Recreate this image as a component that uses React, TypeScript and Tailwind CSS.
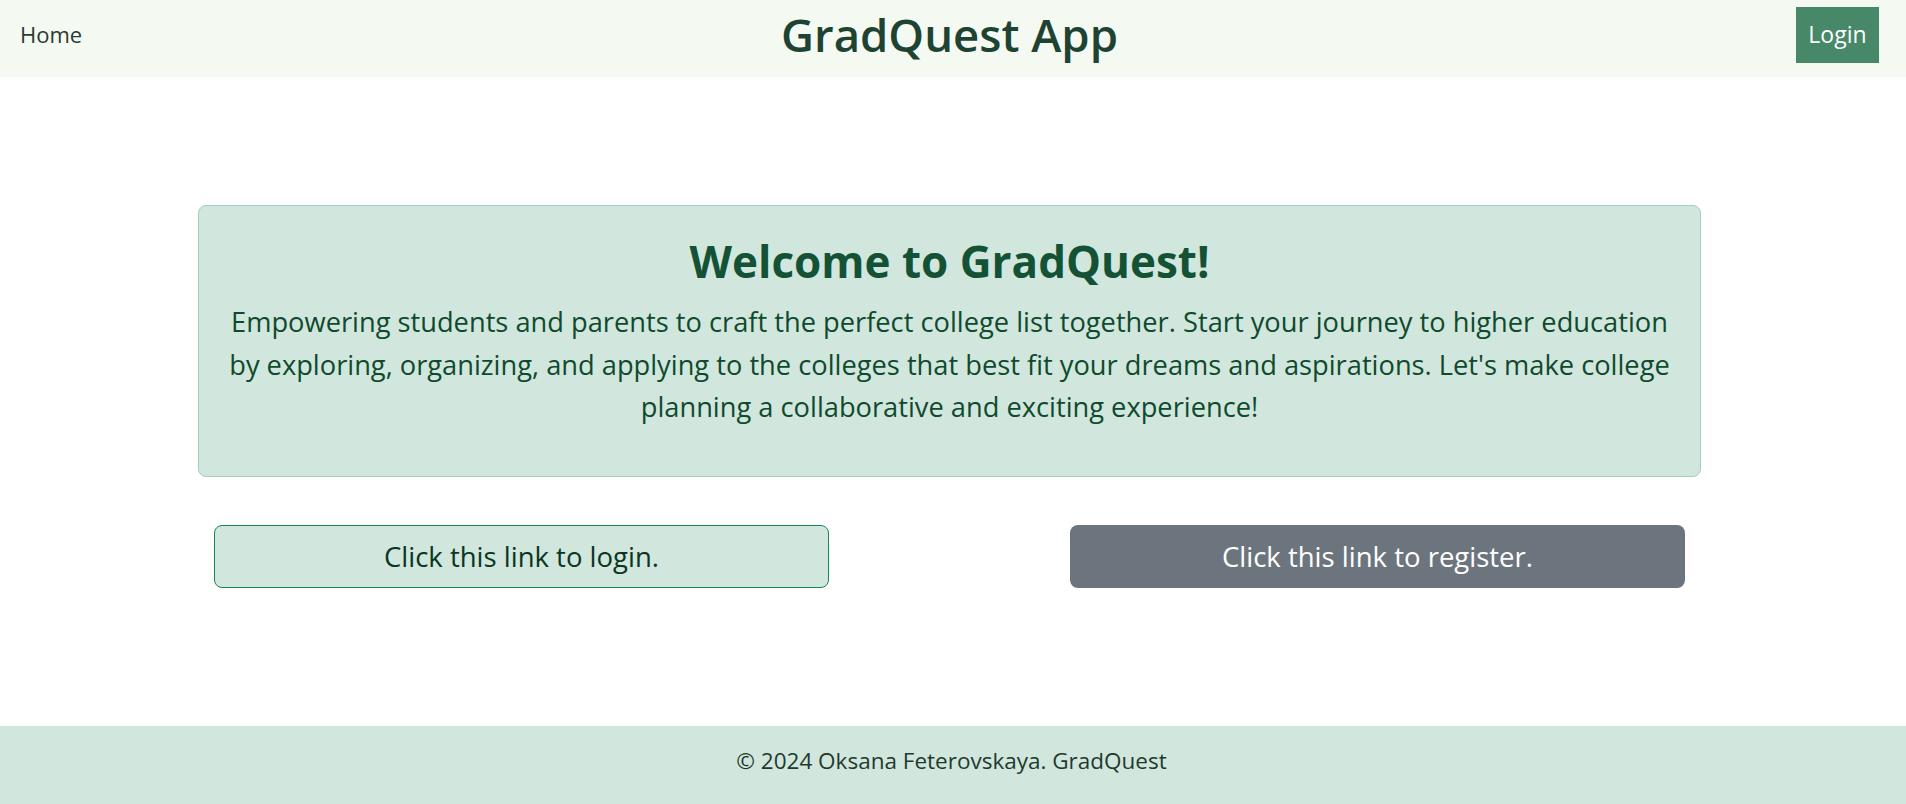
import React from 'react';

const App: React.FC = () => {
  return (
    <div className="h-[804px] flex flex-col bg-white font-['Open_Sans',sans-serif]">
      {/* Top bar */}
      <header className="h-[77px] bg-[#f4f9f2] flex items-center justify-between pl-[20px] pr-[27px] pb-[8px]">
        <a className="text-[22px] text-[#2b3b33] w-[120px]">Home</a>
        <h1 className="text-[45.5px] font-semibold text-[#1f4332] leading-none">GradQuest App</h1>
        <div className="w-[120px] flex justify-end">
          <button className="h-[56px] w-[83px] bg-[#468868] text-white text-[23px]">Login</button>
        </div>
      </header>

      <main className="flex-1 pt-[128px]">
        <div className="w-[1503px] ml-[198px]">
          {/* Welcome alert */}
          <div className="h-[272px] bg-[#d1e7dd] border border-[#a3cfbb] rounded-[8px] px-[6px] pt-[16px] text-center">
            <h2 className="text-[44px] font-bold text-[#145236] leading-[79px]">Welcome to GradQuest!</h2>
            <p className="text-[27.25px] leading-[42.5px] text-[#0f4a2e] whitespace-nowrap">
              Empowering students and parents to craft the perfect college list together. Start your journey to higher education
              <br />
              by exploring, organizing, and applying to the colleges that best fit your dreams and aspirations. Let's make college
              <br />
              planning a collaborative and exciting experience!
            </p>
          </div>

          {/* Actions */}
          <div className="flex justify-between px-[16px] mt-[48px]">
            <a className="w-[615px] h-[63px] flex items-center justify-center bg-[#d1e7dd] border border-[#198754] rounded-[8px] text-[27.5px] text-[#0a3622]">
              Click this link to login.
            </a>
            <a className="w-[615px] h-[63px] flex items-center justify-center bg-[#6c757d] rounded-[8px] text-[27.5px] text-white">
              Click this link to register.
            </a>
          </div>
        </div>
      </main>

      <footer className="h-[78px] bg-[#d1e7dd] flex items-center justify-center pb-[8px]">
        <p className="text-[22.5px] text-[#1f3a2d] ml-[-3px]">© 2024 Oksana Feterovskaya. GradQuest</p>
      </footer>
    </div>
  );
};

export default App;
